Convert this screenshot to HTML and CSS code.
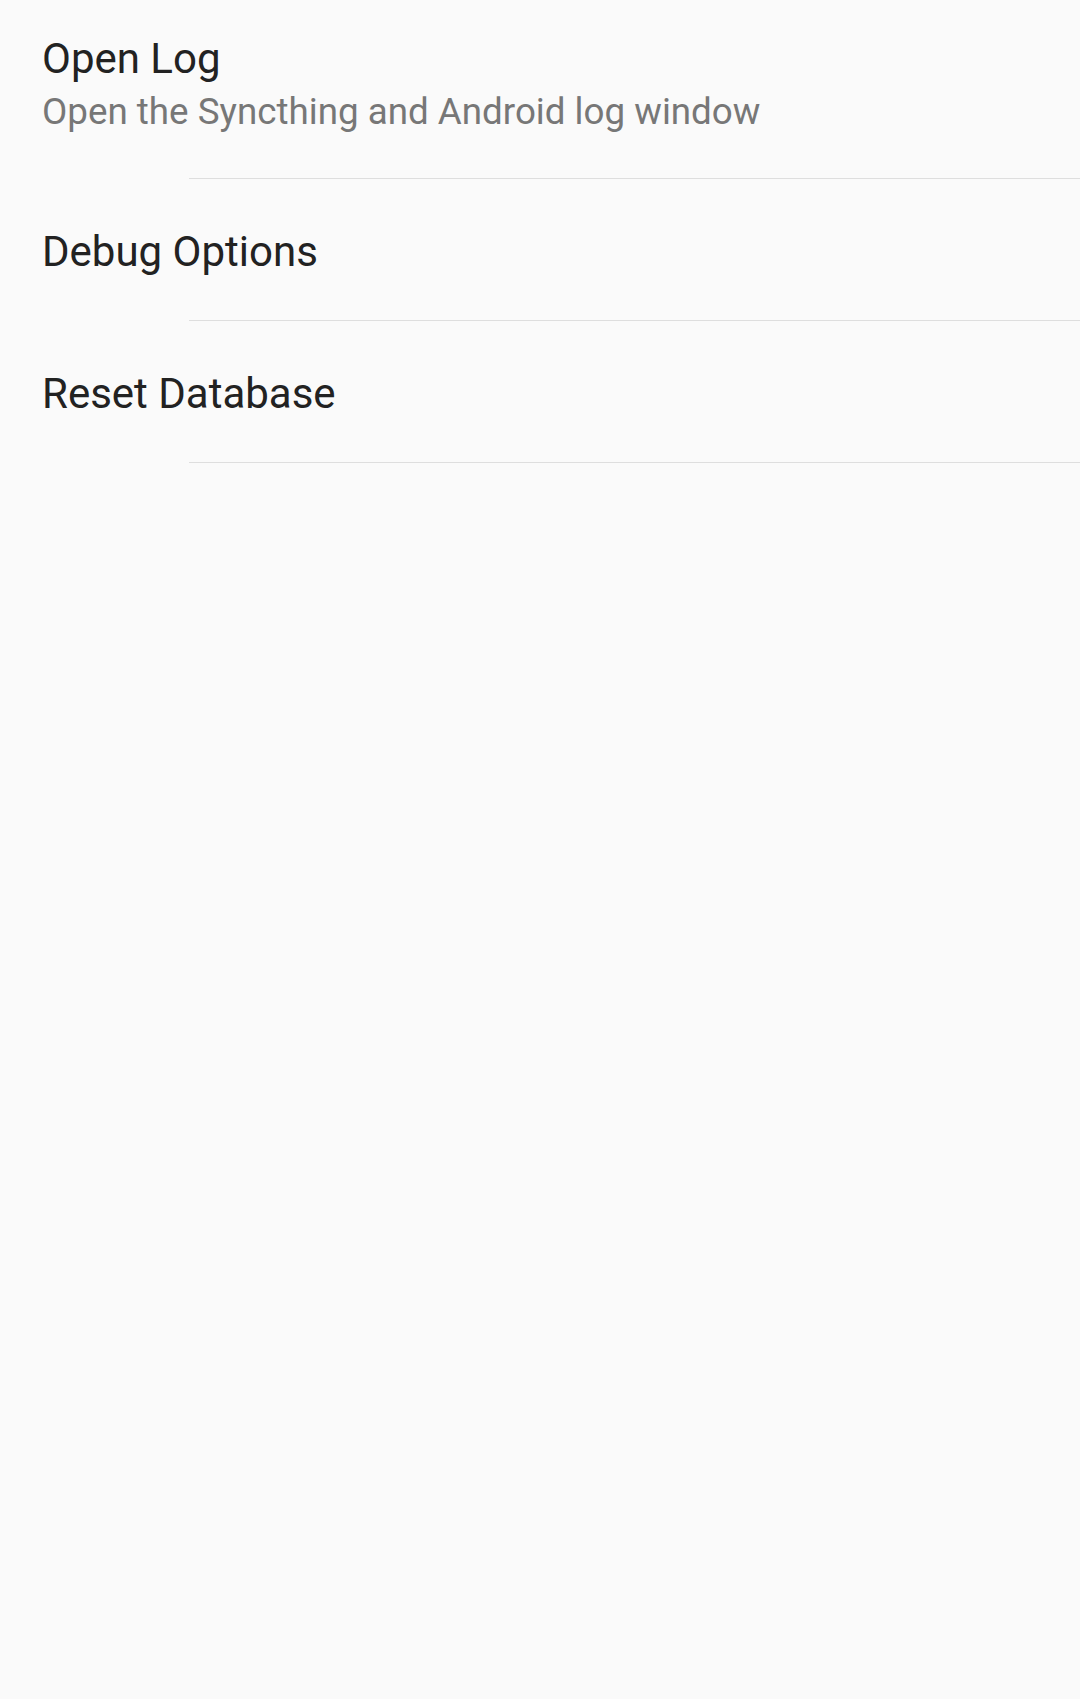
FILE: index.html
```html
<!DOCTYPE html>
<html>
<head>
<meta charset="utf-8">
<link rel="stylesheet" href="styles.css">
</head>
<body>
<div class="list">
  <div class="pref pref-two">
    <div class="title">Open Log</div>
    <div class="summary">Open the Syncthing and Android log window</div>
  </div>
  <div class="divider"></div>
  <div class="pref pref-one">
    <div class="title">Debug Options</div>
  </div>
  <div class="divider"></div>
  <div class="pref pref-one">
    <div class="title">Reset Database</div>
  </div>
  <div class="divider"></div>
</div>
</body>
</html>
```
FILE: styles.css
```css
html, body {
  margin: 0;
  padding: 0;
  background: #fafafa;
}
body {
  width: 1080px;
  height: 1699px;
  font-family: Roboto, "Noto Sans", sans-serif;
}
.list {
  display: flex;
  flex-direction: column;
}
.pref {
  padding-left: 42px;
  padding-right: 42px;
}
.pref-two {
  padding-top: 34px;
  height: 144px;
}
.pref-one {
  padding-top: 48px;
  height: 93px;
}
.title {
  font-size: 42px;
  line-height: 50px;
  color: #222222;
}
.summary {
  margin-top: 6px;
  font-size: 36.75px;
  line-height: 44px;
  color: #777777;
}
.divider {
  height: 1px;
  margin-left: 189px;
  background: #dedede;
}
```
